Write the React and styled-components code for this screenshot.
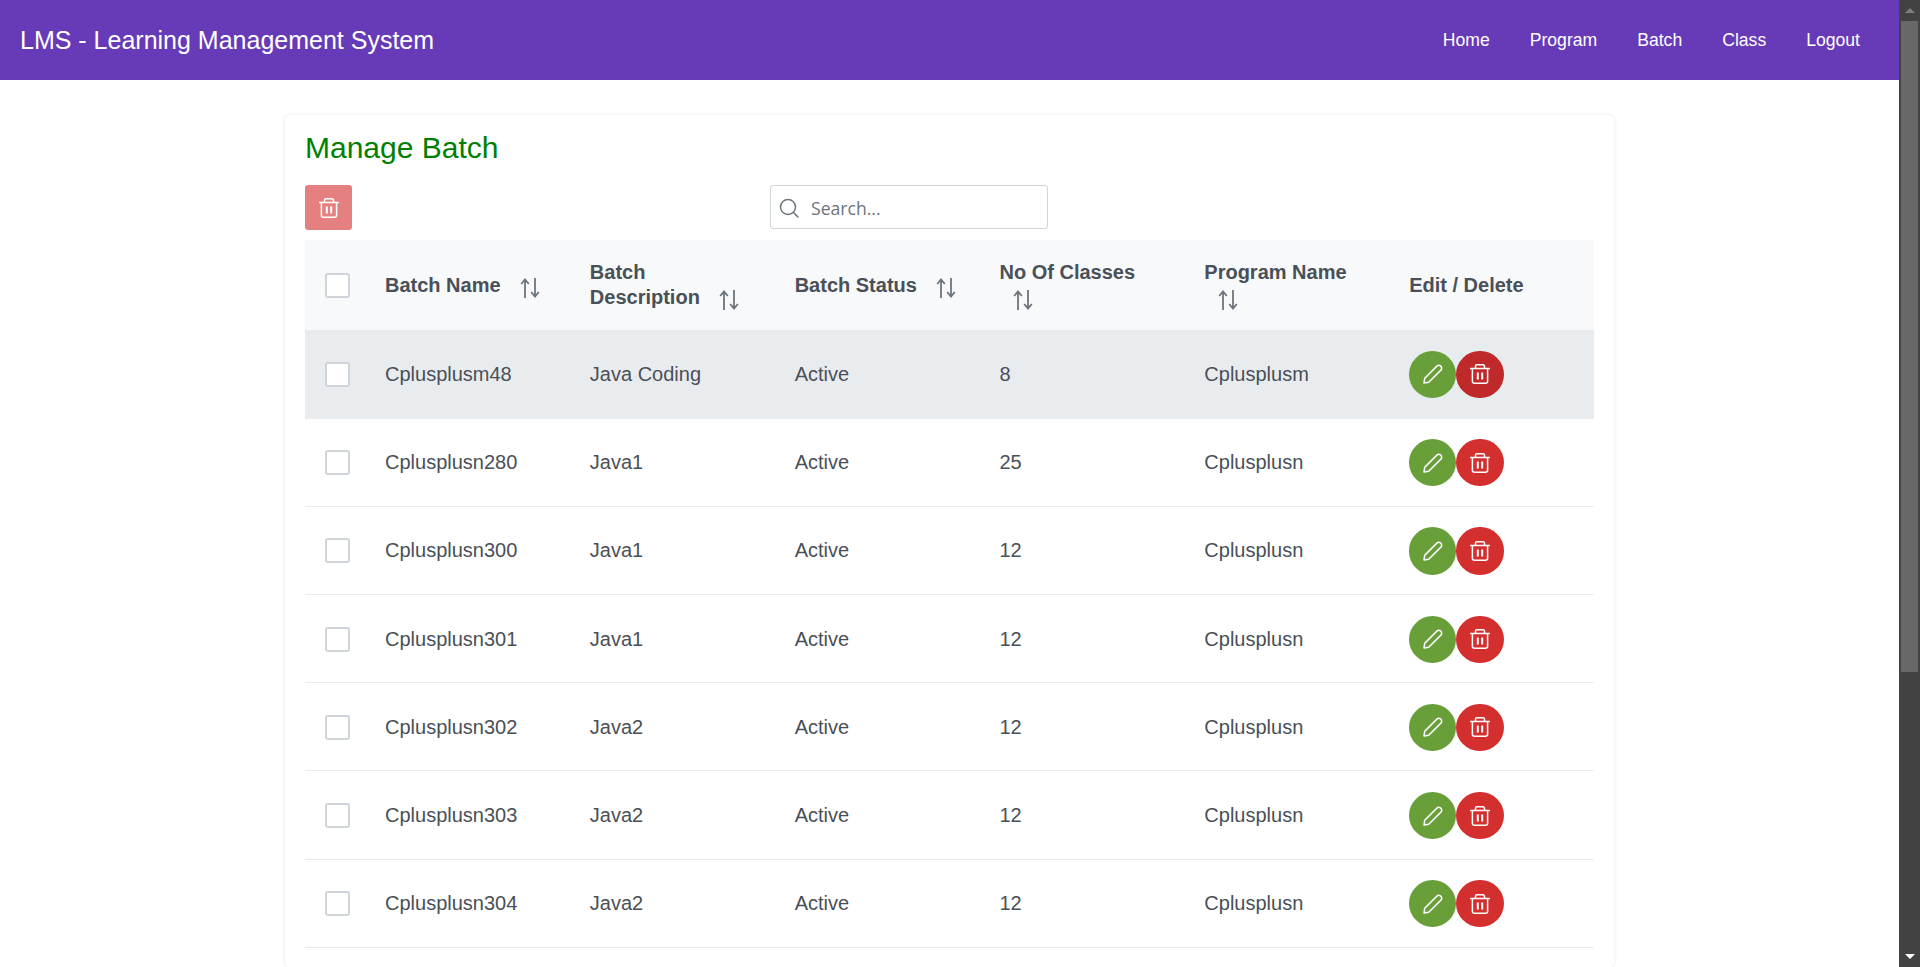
import React from 'react';
import styled, { createGlobalStyle } from 'styled-components';

const GlobalStyle = createGlobalStyle`
  html, body {
    margin: 0;
    padding: 0;
    height: 100%;
    overflow: hidden;
    background: #fff;
  }
  * {
    box-sizing: border-box;
  }
`;

const Screen = styled.div`
  display: flex;
  height: 967px;
  font-family: "Liberation Sans", Arial, sans-serif;
  color: #495057;
`;

const Page = styled.div`
  flex: 1;
  min-width: 0;
  overflow: hidden;
`;

const Header = styled.header`
  display: flex;
  align-items: center;
  justify-content: space-between;
  height: 80px;
  padding: 0 39px 0 20px;
  background: #673ab7;
  color: #fff;
`;

const Brand = styled.div`
  font-size: 25px;
`;

const Nav = styled.nav`
  display: flex;
  gap: 40px;
  font-size: 17.6px;
`;

const Card = styled.section`
  width: 1329px;
  margin: 35px auto 0 285px;
  padding: 0 20px 20px;
  border-radius: 6px;
  background: #fff;
  box-shadow: 0 0 4px rgba(0, 0, 0, 0.1);
`;

const Title = styled.h2`
  margin: 0;
  height: 70px;
  padding-top: 16px;
  font-size: 30px;
  font-weight: 400;
  line-height: 34px;
  color: #008000;
`;

const Toolbar = styled.div`
  display: grid;
  grid-template-columns: 465px 278px;
  align-items: start;
  height: 55px;
`;

const BulkDelete = styled.button`
  display: flex;
  align-items: center;
  justify-content: center;
  width: 47px;
  height: 45px;
  padding: 0;
  border: 0;
  border-radius: 3px;
  background: #e58080;
  color: #fff;
`;

const SearchBox = styled.label`
  display: flex;
  align-items: center;
  gap: 12px;
  height: 44px;
  padding: 1px 8px 0;
  border: 1px solid #ced4da;
  border-radius: 3px;
  color: #6c757d;
`;

const SearchInput = styled.input`
  flex: 1;
  min-width: 0;
  padding: 0;
  border: 0;
  outline: 0;
  background: transparent;
  font-family: "Open Sans", sans-serif;
  font-size: 17.6px;
  color: #495057;
  &::placeholder {
    color: #6c757d;
    opacity: 1;
  }
`;

const Table = styled.table`
  width: 1289px;
  border-collapse: collapse;
  table-layout: fixed;
`;

const HeadCell = styled.th`
  width: ${(p) => p.$width}px;
  height: 90px;
  padding: 20px;
  background: #f8f9fa;
  font-size: 20px;
  font-weight: 700;
  line-height: 25px;
  text-align: left;
  color: #495057;
`;

const Row = styled.tr`
  background: ${(p) => (p.$active ? '#e9ecef' : '#fff')};
  border-bottom: 1px solid #e9ecef;
`;

const Cell = styled.td`
  height: 88.2px;
  padding: 1px 20px 0;
  font-size: 20px;
  color: #495057;
`;

const Checkbox = styled.span`
  display: block;
  width: 25px;
  height: 25px;
  border: 2px solid #ced4da;
  border-radius: 3px;
  background: #fff;
`;

const SortIcon = styled.svg`
  display: inline-block;
  width: 20px;
  height: 20px;
  margin-left: 13.5px;
  vertical-align: -6px;
  color: #6c757d;
`;

const Actions = styled.div`
  display: flex;
`;

const RoundButton = styled.button`
  display: flex;
  align-items: center;
  justify-content: center;
  width: 47.2px;
  height: 47.2px;
  padding: 0;
  border: 0;
  border-radius: 50%;
  background: ${(p) => p.$bg};
  color: #fff;
`;

const Scrollbar = styled.div`
  display: flex;
  flex-direction: column;
  flex: 0 0 21px;
  height: 967px;
  background: #424242;
`;

const ScrollArrow = styled.div`
  display: flex;
  align-items: center;
  justify-content: center;
  flex: 0 0 21px;
  &::before {
    content: '';
    border-left: 5px solid transparent;
    border-right: 5px solid transparent;
    ${(p) => (p.$down ? 'border-top: 5px solid #fff;' : 'border-bottom: 5px solid #7e7e7e;')}
  }
`;

const ScrollThumb = styled.div`
  flex: 0 0 651px;
  margin: 0 2px;
  background: #686868;
`;

const ScrollTrack = styled.div`
  flex: 1;
`;

const TrashIcon = () => (
  <svg width="20" height="20" viewBox="0 0 20 20" fill="none" stroke="currentColor" strokeWidth="1.5">
    <path d="M0.5 4.5h19" strokeLinecap="round" />
    <path d="M5.5 4.5V2.2a1.4 1.4 0 0 1 1.4-1.4h6.2a1.4 1.4 0 0 1 1.4 1.4v2.3" />
    <path d="M2.4 4.5V17.2a2 2 0 0 0 2 2h11.2a2 2 0 0 0 2-2V4.5" />
    <path d="M7.8 8.5v7M12.2 8.5v7" strokeWidth="2" />
  </svg>
);

const PencilIcon = () => (
  <svg width="20" height="20" viewBox="0 0 20 20" fill="none" stroke="currentColor" strokeWidth="1.5" strokeLinejoin="round">
    <path d="M1 19l0.7-4.7L13.9 2.1a2.6 2.6 0 0 1 3.7 0l0.3 0.3a2.6 2.6 0 0 1 0 3.7L5.7 18.3z" />
  </svg>
);

const SearchIcon = () => (
  <svg width="20" height="20" viewBox="0 0 20 20" fill="none" stroke="currentColor" strokeWidth="1.5" strokeLinecap="round">
    <circle cx="9" cy="9" r="7.5" />
    <path d="M14.5 14.5L19 19" />
  </svg>
);

const Sort = () => (
  <SortIcon viewBox="0 0 20 20" fill="none" stroke="currentColor" strokeWidth="1.8" strokeLinejoin="miter">
    <path d="M5 20V1.5M1.2 6L5 1.5 8.8 6" />
    <path d="M15 0v18.5M11.2 14L15 18.5 18.8 14" />
  </SortIcon>
);

const columns = [
  { label: 'Batch Name', sortable: true },
  { label: 'Batch Description', sortable: true },
  { label: 'Batch Status', sortable: true },
  { label: 'No Of Classes', sortable: true },
  { label: 'Program Name', sortable: true },
  { label: 'Edit / Delete', sortable: false },
];

const batches = [
  ['Cplusplusm48', 'Java Coding', 'Active', '8', 'Cplusplusm'],
  ['Cplusplusn280', 'Java1', 'Active', '25', 'Cplusplusn'],
  ['Cplusplusn300', 'Java1', 'Active', '12', 'Cplusplusn'],
  ['Cplusplusn301', 'Java1', 'Active', '12', 'Cplusplusn'],
  ['Cplusplusn302', 'Java2', 'Active', '12', 'Cplusplusn'],
  ['Cplusplusn303', 'Java2', 'Active', '12', 'Cplusplusn'],
  ['Cplusplusn304', 'Java2', 'Active', '12', 'Cplusplusn'],
];

export default function App() {
  return (
    <Screen>
      <GlobalStyle />
      <Page>
        <Header>
          <Brand>LMS - Learning Management System</Brand>
          <Nav>
            <span>Home</span>
            <span>Program</span>
            <span>Batch</span>
            <span>Class</span>
            <span>Logout</span>
          </Nav>
        </Header>
        <Card>
          <Title>Manage Batch</Title>
          <Toolbar>
            <BulkDelete aria-label="Delete selected">
              <TrashIcon />
            </BulkDelete>
            <SearchBox>
              <SearchIcon />
              <SearchInput placeholder="Search..." />
            </SearchBox>
          </Toolbar>
          <Table>
            <thead>
              <tr>
                <HeadCell $width={60}>
                  <Checkbox />
                </HeadCell>
                {columns.map((col) => (
                  <HeadCell key={col.label} $width={204.83}>
                    {col.label} {col.sortable && <Sort />}
                  </HeadCell>
                ))}
              </tr>
            </thead>
            <tbody>
              {batches.map((batch, i) => (
                <Row key={batch[0]} $active={i === 0}>
                  <Cell>
                    <Checkbox />
                  </Cell>
                  {batch.map((value, j) => (
                    <Cell key={j}>{value}</Cell>
                  ))}
                  <Cell>
                    <Actions>
                      <RoundButton $bg="#689f38" aria-label="Edit">
                        <PencilIcon />
                      </RoundButton>
                      <RoundButton $bg={i === 0 ? '#c02929' : '#d32f2f'} aria-label="Delete">
                        <TrashIcon />
                      </RoundButton>
                    </Actions>
                  </Cell>
                </Row>
              ))}
            </tbody>
          </Table>
        </Card>
      </Page>
      <Scrollbar>
        <ScrollArrow />
        <ScrollThumb />
        <ScrollTrack />
        <ScrollArrow $down />
      </Scrollbar>
    </Screen>
  );
}
